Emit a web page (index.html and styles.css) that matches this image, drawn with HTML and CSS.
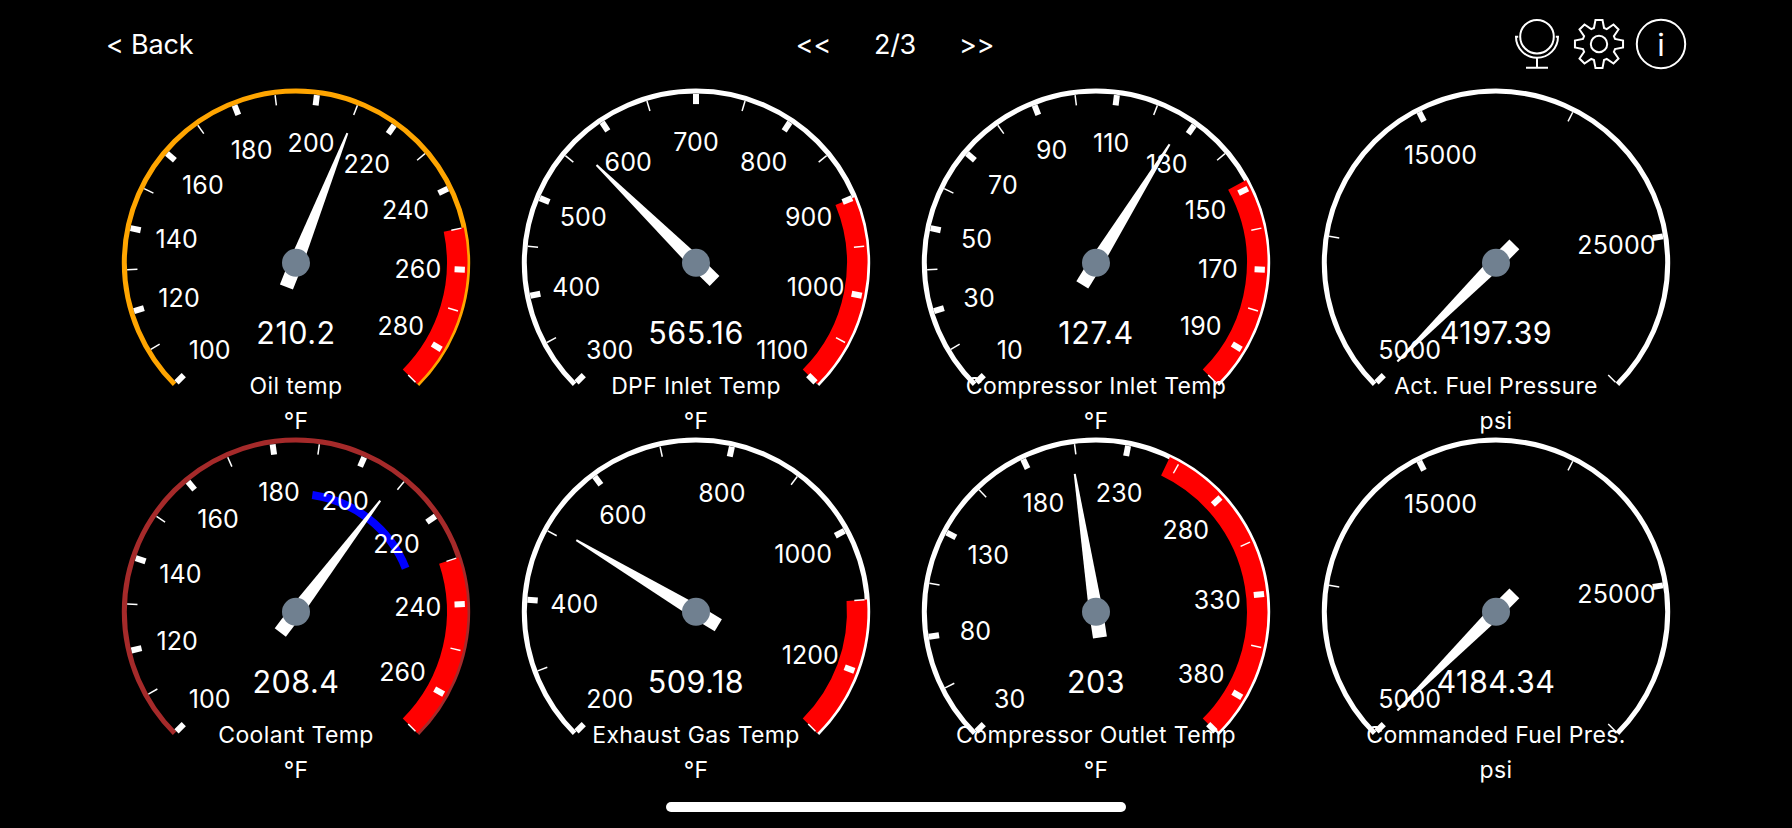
FILE: index.html
```
<!DOCTYPE html>
<html lang="en">
<head>
  <meta charset="UTF-8">
  <meta name="viewport" content="width=device-width, initial-scale=1.0">
  <title>Gauges</title>
  <link rel="stylesheet" href="styles.css">
</head>
<body>
  <header class="topbar">
    <a class="back">&lt; Back</a>
    <nav class="pager">
      <a class="prev">&lt;&lt;</a>
      <span class="page">2/3</span>
      <a class="next">&gt;&gt;</a>
    </nav>
    <div class="tools">
      <svg class="icon" viewBox="-26 -26 52 52">
        <circle cx="0" cy="-7.3" r="16.8" />
        <path d="M-18.8 -7.2H-21A21 21 0 0 0 21 -7.2H18.8M0 14V23.7M-11 23.7H11" />
      </svg>
      <svg class="icon" viewBox="-26 -26 52 52">
        <path id="gear" />
        <circle r="8.2" />
      </svg>
      <svg class="icon" viewBox="-26 -26 52 52">
        <circle r="24.2" />
        <text class="info-i" x="0" y="12.2">i</text>
      </svg>
    </div>
  </header>

  <main id="gauges" class="gauges"></main>

  <div class="home-bar"></div>

  <script src="gauges.js"></script>
</body>
</html>
```
FILE: styles.css
```
* {
  box-sizing: border-box;
}
body {
  margin: 0;
  height: 828px;
  display: flex;
  flex-direction: column;
  overflow: hidden;
  background: #000;
  color: #fff;
  font-family: Inter, "Liberation Sans", sans-serif;
}

/* top bar */
.topbar {
  height: 88px;
  padding: 0 105px 0 106px;
  display: grid;
  grid-template-columns: 1fr auto 1fr;
  align-items: center;
  font-size: 27px;
  font-weight: 400;
}
.back {
  letter-spacing: -0.2px;
}
.pager {
  display: flex;
  gap: 43px;
  margin-right: 3px;
  letter-spacing: -0.3px;
}
.tools {
  display: flex;
  justify-content: flex-end;
  gap: 10px;
}
.icon {
  width: 52px;
  height: 52px;
  fill: none;
  stroke: #fff;
  stroke-width: 2;
}
.info-i {
  fill: #fff;
  stroke: none;
  font-size: 31px;
  font-weight: 400;
  text-anchor: middle;
}

/* gauges */
.gauges {
  display: grid;
  grid-template-columns: repeat(4, 400px);
  grid-auto-rows: 349px;
  justify-content: center;
}
.gauge {
  display: block;
  width: 400px;
  height: 349px;
  overflow: visible;
}
.gauge path,
.gauge line {
  fill: none;
}
.ring {
  stroke: #fff;
  stroke-width: 5;
}
.ring.warn {
  stroke: orange;
}
.ring.alert {
  stroke: brown;
}
.danger {
  stroke: red;
  stroke-width: 20.5;
}
.normal {
  stroke: blue;
  stroke-width: 8;
}
.major {
  stroke: #fff;
  stroke-width: 6;
}
.minor {
  stroke: #fff;
  stroke-width: 1.5;
}
.gauge .needle {
  fill: #fff;
}
.hub {
  fill: slategray;
}
.gauge text {
  fill: #fff;
  text-anchor: middle;
}
.label {
  font-size: 25px;
  letter-spacing: 0.1px;
}
.value {
  font-size: 30.5px;
  letter-spacing: 0.5px;
}
.title,
.unit {
  font-size: 23px;
  letter-spacing: 0.35px;
}

.home-bar {
  width: 460px;
  height: 10px;
  margin: 16px auto 0;
  border-radius: 5px;
  background: #fff;
}
```
FILE: gauges.js
```
const SWEEP = 270;
const START = -135;

// step is the distance between two major ticks, a minor one sits halfway
const gauges = [
  { title: "Oil temp", unit: "°F", min: 100, max: 290, step: 20, value: 210.2, danger: 250, ring: "warn" },
  { title: "DPF Inlet Temp", unit: "°F", min: 300, max: 1100, step: 100, value: 565.16, danger: 900 },
  { title: "Compressor Inlet Temp", unit: "°F", min: 10, max: 200, step: 20, value: 127.4, danger: 148 },
  { title: "Act. Fuel Pressure", unit: "psi", min: 5000, max: 30000, step: 10000, value: 4197.39 },
  { title: "Coolant Temp", unit: "°F", min: 100, max: 270, step: 20, value: 208.4, danger: 230, normal: [190, 228], ring: "alert" },
  { title: "Exhaust Gas Temp", unit: "°F", min: 200, max: 1300, step: 200, value: 509.18, danger: 1100 },
  { title: "Compressor Outlet Temp", unit: "°F", min: 30, max: 400, step: 50, value: 203, danger: 250, endTick: true },
  { title: "Commanded Fuel Pres.", unit: "psi", min: 5000, max: 30000, step: 10000, value: 4184.34 },
];

function point(angle, r) {
  const a = angle * Math.PI / 180;
  return [(r * Math.sin(a)).toFixed(2), (-r * Math.cos(a)).toFixed(2)];
}

function arc(cls, r, from, to) {
  const large = to - from > 180 ? 1 : 0;
  return `<path class="${cls}" d="M${point(from, r)}A${r} ${r} 0 ${large} 1 ${point(to, r)}" />`;
}

function tick(cls, angle) {
  return `<line class="${cls}" x1="0" x2="0" y1="-169" y2="-158.7" transform="rotate(${angle})" />`;
}

function drawGauge(g) {
  const angleOf = (v) => START + (Math.min(Math.max(v, g.min), g.max) - g.min) / (g.max - g.min) * SWEEP;
  let out = arc(`ring ${g.ring || ""}`, 171.7, START, START + SWEEP);

  if (g.danger) out += arc("danger", 161.2, angleOf(g.danger), START + SWEEP);
  if (g.normal) out += arc("normal", 118, angleOf(g.normal[0]), angleOf(g.normal[1]));

  for (let i = 0; g.min + i * g.step / 2 <= g.max; i++) {
    const v = g.min + i * g.step / 2;
    out += tick(i % 2 ? "minor" : "major", angleOf(v));
    if (i % 2 === 0) {
      const [x, y] = point(angleOf(v), 122);
      out += `<text class="label" x="${x}" y="${+y + 9.8}">${v}</text>`;
    }
  }
  if (g.endTick) out += tick("major", START + SWEEP);

  out += `<text class="value" x="0" y="81.5">${g.value}</text>`;
  out += `<text class="title" x="0" y="131.3">${g.title}</text>`;
  out += `<text class="unit" x="0" y="166.2">${g.unit}</text>`;
  out += `<path class="needle" d="M-7 26V0L-1 -139.5H1L7 0V26Z" transform="rotate(${angleOf(g.value)})" />`;
  out += `<circle class="hub" r="14" />`;

  return `<svg class="gauge" viewBox="-200 -174.8 400 349">${out}</svg>`;
}

document.getElementById("gauges").innerHTML = gauges.map(drawGauge).join("");

// gear outline, eight teeth
const teeth = [];
for (let i = 0; i < 8; i++) {
  const a = i * 45;
  teeth.push(point(a - 17.5, 16.8), point(a - 8.3, 24.3), point(a + 8.3, 24.3), point(a + 17.5, 16.8));
}
document.getElementById("gear").setAttribute("d", "M" + teeth.join("L") + "Z");
```
